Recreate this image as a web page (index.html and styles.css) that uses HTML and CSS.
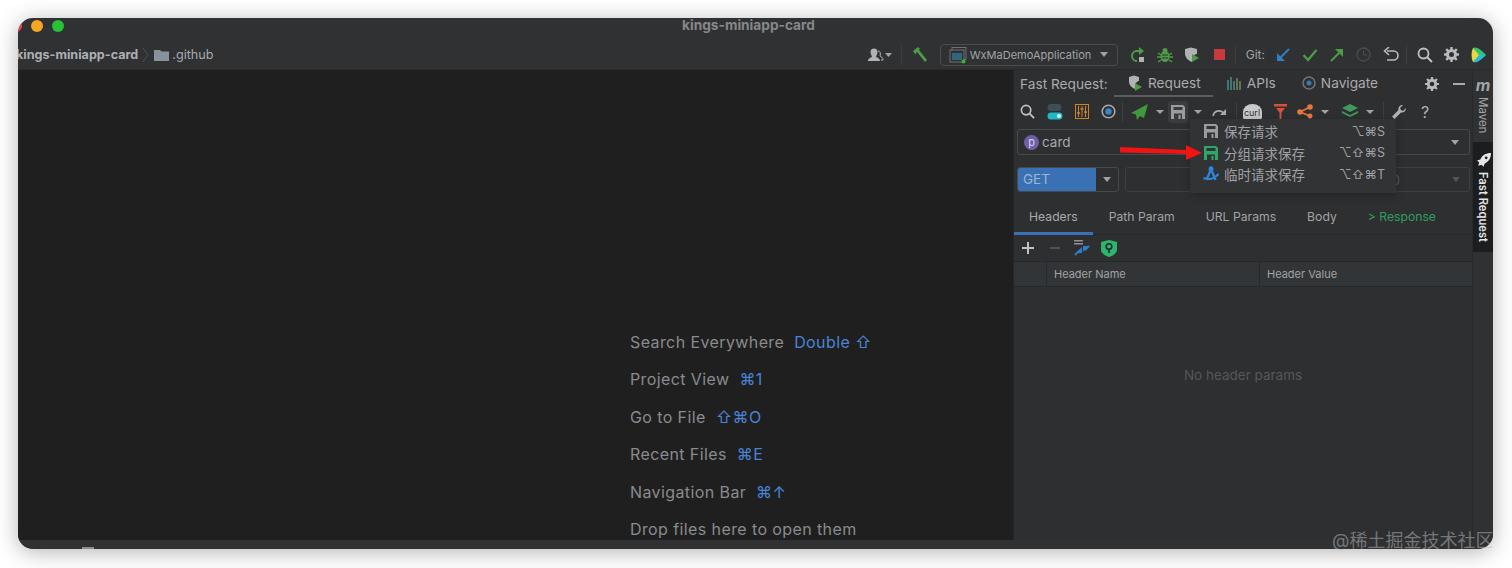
FILE: index.html
```html
<!DOCTYPE html>
<html lang="en">
<head>
  <meta charset="UTF-8">
  <title>kings-miniapp-card</title>
  <link rel="stylesheet" href="styles.css">
</head>
<body>

<div class="window">
  <!-- title bar -->
  <div class="titlebar">
    <div class="lights">
      <span class="light red"></span>
      <span class="light orange"></span>
      <span class="light green"></span>
    </div>
    <div class="title">kings-miniapp-card</div>
  </div>

  <!-- breadcrumb + main toolbar -->
  <div class="navbar">
    <span class="crumb-root">kings-miniapp-card</span>
    <svg class="crumb-sep" width="8" height="18" viewBox="0 0 8 18"><path d="M1 2l5 7-5 7" fill="none" stroke="#4c4f51"/></svg>
    <svg class="crumb-folder" width="15" height="12" viewBox="0 0 15 12"><path d="M0 1h6l1.500 1.500H15V12H0z" fill="#87929c"/></svg>
    <span class="crumb-dir">.github</span>

    <div class="main-tools">
      <div class="tool wide">
        <svg width="27" height="16" viewBox="0 0 27 16"><path d="M2 14c0-3 3-3 4-4.500C5 8 4.500 6.500 4.500 5a3.500 3.500 0 0 1 7 0c0 1.500-.5 3-1.500 4.500 1 1.500 4 1.500 4 4.500z" fill="#b0b2b4"/><path d="M12 4c2 0 3 2 2 5 1 1 3 1 3 4h-2" fill="none" stroke="#b0b2b4"/><path d="M19 6h7l-3.500 4z" fill="#a0a2a4"/></svg>
      </div>
      <span class="sep"></span>
      <div class="tool hammer">
        <svg width="18" height="18" viewBox="0 0 18 18"><path d="M2 5l5-4 2 2-1 1 8 10-2 2-8-10-1 1 0 2z" fill="#4e9a47"/></svg>
      </div>
      <div class="run-config">
        <svg width="18" height="18" viewBox="0 0 18 18"><rect x="3" y="1.500" width="14" height="12" fill="none" stroke="#6f7274"/><rect x="1" y="4" width="14" height="12" fill="#2f3133" stroke="#6f7274"/><rect x="3" y="7" width="10" height="7" fill="#33667e"/><circle cx="14.500" cy="15.500" r="2" fill="#2dbb2d"/></svg>
        <span>WxMaDemoApplication</span>
        <span class="caret"></span>
      </div>
      <div class="tool">
        <svg width="16" height="18" viewBox="0 0 16 18"><path d="M11 5H7a5 5 0 0 0 0 10" fill="none" stroke="#4e9a47" stroke-width="2"/><path d="M9 1l5 4-5 4z" fill="#4e9a47"/><rect x="9" y="11" width="5" height="5" fill="#b0b2b4"/></svg>
      </div>
      <div class="tool">
        <svg width="16" height="16" viewBox="0 0 16 16"><ellipse cx="8" cy="9.500" rx="4.500" ry="5.500" fill="#4e9a47"/><circle cx="8" cy="3.500" r="2.500" fill="#4e9a47"/><path d="M1 6l3 2M15 6l-3 2M0 10h4M16 10h-4M1 15l3-2M15 15l-3-2" stroke="#4e9a47" stroke-width="1.500"/><path d="M5 8h6M5 11h6" stroke="#2f3133"/></svg>
      </div>
      <div class="tool">
        <svg width="16" height="16" viewBox="0 0 16 16"><path d="M1 2l6-1.500L13 2v5c-2 0-5 2-5 8C3 13 1 10 1 6z" fill="#b0b2b4"/><path d="M8 7l7 4-7 4z" fill="#4e9a47"/></svg>
      </div>
      <div class="tool">
        <span class="stop"></span>
      </div>
      <span class="sep"></span>
      <span class="git-label">Git:</span>
      <div class="tool">
        <svg width="14" height="14" viewBox="0 0 14 14"><path d="M13 1L3 11" stroke="#2f7fc4" stroke-width="2"/><path d="M1 5v8h8z" fill="#2f7fc4"/></svg>
      </div>
      <div class="tool">
        <svg width="16" height="14" viewBox="0 0 16 14"><path d="M1.500 7l4.500 5L14.500 2" fill="none" stroke="#4e9a47" stroke-width="2.400"/></svg>
      </div>
      <div class="tool">
        <svg width="14" height="14" viewBox="0 0 14 14"><path d="M1 13L11 3" stroke="#4e9a47" stroke-width="2"/><path d="M13 9V1H5z" fill="#4e9a47"/></svg>
      </div>
      <div class="tool">
        <svg width="15" height="15" viewBox="0 0 15 15"><circle cx="7.500" cy="7.500" r="6.500" fill="none" stroke="#4a4c4e" stroke-width="1.300"/><path d="M7.500 3.500v4.500h3.500" fill="none" stroke="#4a4c4e"/></svg>
      </div>
      <div class="tool">
        <svg width="16" height="15" viewBox="0 0 16 15"><path d="M4 4h6.500a4 4 0 0 1 0 9H4" fill="none" stroke="#b8babc" stroke-width="1.600"/><path d="M6 0L1.500 4 6 8" fill="none" stroke="#b8babc" stroke-width="1.600"/></svg>
      </div>
      <span class="sep"></span>
      <div class="tool search-gap">
        <svg width="16" height="16" viewBox="0 0 16 16"><circle cx="6.500" cy="6.500" r="5" fill="none" stroke="#c0c2c4" stroke-width="1.800"/><path d="M10 10l5 5" stroke="#c0c2c4" stroke-width="2"/></svg>
      </div>
      <div class="tool">
        <svg width="15" height="15" viewBox="0 0 15 15"><circle cx="7.500" cy="7.500" r="4" fill="none" stroke="#b8babc" stroke-width="3"/><path d="M7.500 0v3M7.500 12v3M0 7.500h3M12 7.500h3M2.200 2.200l2 2M10.800 10.800l2 2M2.200 12.800l2-2M10.800 4.200l2-2" stroke="#b8babc" stroke-width="2.400"/></svg>
      </div>
      <div class="tool">
        <svg width="16" height="16" viewBox="0 0 16 16"><path d="M2 1c3-1 6 0 13 7-7 7-10 8-13 7z" fill="#2bb8d8"/><path d="M2 1c3-1 6 0 13 7H8z" fill="#35c46a"/><path d="M2 1l6 7-6 7C0 11 0 5 2 1z" fill="#e8d93a"/></svg>
      </div>
    </div>
  </div>

  <div class="workspace">
    <!-- empty editor -->
    <div class="editor">
      <div class="hint">Search Everywhere <b class="key">Double ⇧</b></div>
      <div class="hint">Project View <b class="key">⌘1</b></div>
      <div class="hint">Go to File <b class="key">⇧⌘O</b></div>
      <div class="hint">Recent Files <b class="key">⌘E</b></div>
      <div class="hint">Navigation Bar <b class="key">⌘↑</b></div>
      <div class="hint">Drop files here to open them</div>
    </div>

    <!-- Fast Request tool window -->
    <div class="panel">
      <div class="panel-head">
        <span class="panel-name">Fast Request:</span>
        <div class="head-tab active">
          <svg width="15" height="16" viewBox="0 0 15 16"><path d="M1 2l5-1.500L11 2v4c-2 0-4 2-4 8-4-2-6-4-6-8z" fill="#b0b2b4"/><path d="M7 8l7 4-7 4z" fill="#4e9a47"/></svg>
          <span>Request</span>
        </div>
        <div class="head-tab">
          <svg width="15" height="14" viewBox="0 0 15 14"><path d="M1 4v10M4 1v13M7 5v9" stroke="#4e8a8a" stroke-width="1.500"/><path d="M10 2v12M13 5v9" stroke="#7a8a5a" stroke-width="1.500"/></svg>
          <span>APIs</span>
        </div>
        <div class="head-tab">
          <svg width="14" height="14" viewBox="0 0 14 14"><circle cx="7" cy="7" r="6" fill="none" stroke="#6e7274" stroke-width="1.600"/><circle cx="7" cy="7" r="2.500" fill="#3a78b0"/></svg>
          <span>Navigate</span>
        </div>
        <div class="head-icons">
          <svg width="14" height="14" viewBox="0 0 15 15"><circle cx="7.500" cy="7.500" r="4" fill="none" stroke="#b8babc" stroke-width="3"/><path d="M7.500 0v3M7.500 12v3M0 7.500h3M12 7.500h3M2.200 2.200l2 2M10.800 10.800l2 2M2.200 12.800l2-2M10.800 4.200l2-2" stroke="#b8babc" stroke-width="2.400"/></svg>
          <span class="minimize"></span>
        </div>
      </div>

      <div class="panel-tools">
        <div class="ptool">
          <svg width="15" height="15" viewBox="0 0 16 16"><circle cx="6.500" cy="6.500" r="5" fill="none" stroke="#c0c2c4" stroke-width="1.800"/><path d="M10 10l5 5" stroke="#c0c2c4" stroke-width="2"/></svg>
        </div>
        <div class="ptool">
          <svg width="16" height="16" viewBox="0 0 16 16"><rect x="0.500" y="0" width="14" height="7" rx="3.500" fill="#3d5058"/><rect x="0.500" y="8.500" width="15" height="7" rx="3.500" fill="#1fbac4"/><circle cx="12" cy="12" r="2" fill="#e0f4f4"/></svg>
        </div>
        <div class="ptool">
          <svg width="14" height="15" viewBox="0 0 14 15"><rect x="0.500" y="0.500" width="13" height="14" fill="none" stroke="#d0822a"/><path d="M3.500 2v11M7 2v11M10.500 2v11" stroke="#d0822a"/><path d="M2 9h3M5.500 5h3M9 8h3" stroke="#d0822a" stroke-width="1.600"/></svg>
        </div>
        <div class="ptool">
          <svg width="15" height="15" viewBox="0 0 15 15"><circle cx="7.500" cy="7.500" r="6.300" fill="none" stroke="#a8aaac" stroke-width="1.600"/><circle cx="7.500" cy="7.500" r="3.200" fill="#3a86c8"/></svg>
        </div>
        <span class="sep panel-sep"></span>
        <div class="ptool plane">
          <svg width="17" height="16" viewBox="0 0 17 16"><path d="M17 0L0 9l5 1.500 1 5.500 3-4 4 2z" fill="#3f9a3c"/></svg>
        </div>
        <span class="caret small"></span>
        <div class="ptool save-on">
          <svg width="14" height="14" viewBox="0 0 14 14"><path d="M0 0h12l2 2v12H0z" fill="#9a9c9e"/><rect x="2.500" y="2" width="9" height="3" fill="#3a3d3f"/><rect x="3" y="8.500" width="8" height="5.500" fill="#3a3d3f"/><rect x="7.500" y="10" width="2" height="4" fill="#9a9c9e"/></svg>
        </div>
        <span class="caret small after-save"></span>
        <div class="ptool redo">
          <svg width="15" height="10" viewBox="0 0 15 10"><path d="M1 9c1-5 6-7 11-3" fill="none" stroke="#a8aaac" stroke-width="1.600"/><path d="M14 2v6H8z" fill="#a8aaac"/></svg>
        </div>
        <span class="sep panel-sep"></span>
        <div class="ptool curl">
          <span class="curl-badge">curl</span>
        </div>
        <div class="ptool filter">
          <svg width="13" height="15" viewBox="0 0 13 15"><path d="M0 0h13v2.500H0z" fill="#d6503c"/><path d="M2 4h9L7.500 8.500V15h-2V8.500z" fill="#d6503c"/></svg>
        </div>
        <div class="ptool share">
          <svg width="16" height="15" viewBox="0 0 16 15"><path d="M3 8l10-5M3 8l10 4" stroke="#e8763c" stroke-width="1.600"/><circle cx="3" cy="8" r="2.800" fill="#e8763c"/><circle cx="13" cy="3" r="2.800" fill="#e8763c"/><circle cx="13" cy="12" r="2.500" fill="#e8763c"/></svg>
        </div>
        <span class="caret small after-share"></span>
        <div class="ptool layers">
          <svg width="16" height="15" viewBox="0 0 16 15"><path d="M8 0l8 4-8 4-8-4z" fill="#3f9a5c"/><path d="M0 7l8 4 8-4v2l-8 4-8-4z" fill="#3f9a5c"/></svg>
        </div>
        <span class="caret small"></span>
        <span class="sep panel-sep last"></span>
        <div class="ptool wrench">
          <svg width="14" height="14" viewBox="0 0 14 14"><path d="M14 3l-3 3-2-1-1-2 3-3C8 0 6 2 6.500 5L0 11.500 2.500 14 9 7.500C12 8 14 6 14 3z" fill="#b0b2b4"/></svg>
        </div>
        <div class="ptool help">?</div>
      </div>

      <div class="field project">
        <span class="project-badge">p</span>
        <span>card</span>
        <span class="caret"></span>
      </div>

      <div class="url-row">
        <div class="method">
          <span class="method-name">GET</span>
          <span class="method-arrow"><span class="caret"></span></span>
        </div>
        <div class="field url">
          <span class="url-num">0</span>
          <span class="caret dim"></span>
        </div>
      </div>

      <div class="tabs">
        <div class="tab active">Headers</div>
        <div class="tab">Path Param</div>
        <div class="tab">URL Params</div>
        <div class="tab">Body</div>
        <div class="tab response">&gt; Response</div>
      </div>

      <div class="header-tools">
        <svg width="12" height="12" viewBox="0 0 12 12"><path d="M6 0v12M0 6h12" stroke="#c0c2c4" stroke-width="2"/></svg>
        <svg width="12" height="12" viewBox="0 0 12 12"><path d="M1 6h10" stroke="#505355" stroke-width="2"/></svg>
        <svg class="merge-icon" width="16" height="16" viewBox="0 0 16 16"><path d="M0 0h9v1.500H0zM0 3h9v1.500H0z" fill="#8f9193"/><path d="M1 15l5-5" stroke="#2f7fc4" stroke-width="2"/><path d="M8 7v6H2z" fill="#2f7fc4"/><path d="M15 6l-4 4" stroke="#2f7fc4" stroke-width="2"/><path d="M9 12V6h6z" fill="#2f7fc4"/></svg>
        <svg class="shield-icon" width="16" height="17" viewBox="0 0 16 17"><path d="M0 2l8-2 8 2v8c0 3-4 6-8 7-4-1-8-4-8-7z" fill="#2fb56a"/><circle cx="8" cy="6.500" r="2.800" fill="none" stroke="#123" stroke-width="1.500"/><path d="M8 9v4" stroke="#123" stroke-width="1.500"/></svg>
      </div>

      <div class="table-head">
        <div class="col col-index"></div>
        <div class="col col-name">Header Name</div>
        <div class="col col-value">Header Value</div>
      </div>

      <div class="empty">No header params</div>

      <!-- save dropdown -->
      <div class="menu">
        <div class="menu-item">
          <svg width="14" height="14" viewBox="0 0 14 14"><path d="M0 0h12l2 2v12H0z" fill="#9a9c9e"/><rect x="2.500" y="2" width="9" height="3" fill="#313335"/><rect x="3" y="8.500" width="8" height="5.500" fill="#313335"/><rect x="7.500" y="10" width="2" height="4" fill="#9a9c9e"/></svg>
          <span class="menu-label">保存请求</span>
          <span class="menu-key">⌥⌘S</span>
        </div>
        <div class="menu-item">
          <svg width="14" height="14" viewBox="0 0 14 14"><path d="M0 0h12l2 2v12H0z" fill="#2fa866"/><rect x="2.500" y="2" width="9" height="3" fill="#313335"/><rect x="3" y="8.500" width="8" height="5.500" fill="#313335"/><rect x="7.500" y="10" width="2" height="4" fill="#2fa866"/></svg>
          <span class="menu-label">分组请求保存</span>
          <span class="menu-key">⌥⇧⌘S</span>
        </div>
        <div class="menu-item">
          <svg class="compass" width="16" height="16" viewBox="0 0 16 16"><path d="M8 3L3.500 14M8 3l4.500 11M0.500 12c5 2 11 1 15-4" fill="none" stroke="#2f86dc" stroke-width="2.200"/><circle cx="8" cy="2.800" r="2.500" fill="#2f86dc"/></svg>
          <span class="menu-label">临时请求保存</span>
          <span class="menu-key">⌥⇧⌘T</span>
        </div>
      </div>

      <svg class="red-arrow" width="82" height="15" viewBox="0 0 82 15"><path d="M0 2L66 5V0l16 8-16 7V9L0 7.500z" fill="#f01414"/></svg>
    </div>

    <!-- right tool strip -->
    <div class="strip">
      <div class="strip-m">m</div>
      <div class="strip-maven">Maven</div>
      <div class="strip-active">
        <svg width="15" height="16" viewBox="0 0 14 15"><path d="M14 0c-5 0-8 2-10 6L1 7l2 2-1 3 3-1 2 2 1-3c4-2 6-5 6-10z" fill="#e6e6e6"/><circle cx="9.500" cy="4.500" r="1.300" fill="#1c1d1e"/></svg>
        <span>Fast Request</span>
      </div>
    </div>
  </div>

  <div class="statusbar">
    <span class="status-mark"></span>
  </div>
</div>

<div class="watermark">@稀土掘金技术社区</div>

</body>
</html>
```

FILE: styles.css
```css
html, body {
  margin: 0;
  padding: 0;
  height: 100%;
  background-color: #fff;
  overflow: hidden;
  font-family: Inter, "Noto Sans CJK SC", "DejaVu Sans", sans-serif;
}

body {
  padding: 18px 0 0 18px;
  box-sizing: border-box;
}

.window {
  width: 1475px;
  height: 531px;
  border-radius: 15px;
  overflow: hidden;
  background-color: #2f3133;
  box-shadow: 0 3px 22px rgba(0, 0, 0, 0.3);
  display: flex;
  flex-direction: column;
}

/* title bar */
.titlebar {
  height: 22px;
  flex: none;
  display: flex;
  align-items: center;
  padding-bottom: 8px;
  box-sizing: border-box;
}

.lights {
  display: flex;
  gap: 9px;
  margin: 2px 0 0 -8px;
  flex: none;
}

.light {
  width: 12px;
  height: 12px;
  border-radius: 50%;
}

.light.red { background-color: #e5484d; }
.light.orange { background-color: #f5a623; }
.light.green { background-color: #28c236; }

.title {
  margin-left: 618px;
  font-size: 13.700px;
  font-weight: 700;
  color: #85878a;
}

/* breadcrumb bar */
.navbar {
  height: 30px;
  flex: none;
  display: flex;
  align-items: center;
  font-size: 12.600px;
  color: #a9abad;
  border-bottom: 1px solid #292b2d;
  box-sizing: border-box;
}

.crumb-root {
  font-weight: 700;
  margin-left: -2px;
  color: #adb0b2;
}

.crumb-sep {
  margin-left: 4px;
}

.crumb-folder {
  margin-left: 4px;
}

.crumb-dir {
  margin-left: 3px;
}

.main-tools {
  margin-left: auto;
  display: flex;
  align-items: center;
  padding-right: 1px;
}

.tool {
  width: 27px;
  height: 26px;
  display: flex;
  align-items: center;
  justify-content: center;
}

.tool.wide {
  width: 33px;
  justify-content: flex-start;
}

.tool.hammer {
  margin-left: 3px;
}

.sep {
  width: 1px;
  height: 20px;
  background-color: #3c3e40;
  margin: 0 2px;
  flex: none;
}

.run-config {
  width: 178px;
  height: 22px;
  box-sizing: border-box;
  margin: 0 7px 0 6px;
  border: 1px solid #4a4d4f;
  border-radius: 4px;
  display: flex;
  align-items: center;
  gap: 3px;
  padding: 0 9px 0 8px;
  font-size: 11px;
  color: #a2a4a6;
}

.run-config svg {
  flex: none;
}

.run-config .caret {
  margin-left: auto;
}

.caret {
  width: 0;
  height: 0;
  flex: none;
  border-left: 4.500px solid transparent;
  border-right: 4.500px solid transparent;
  border-top: 5px solid #a0a2a4;
}

.caret.small {
  border-left-width: 4px;
  border-right-width: 4px;
  border-top-width: 4px;
}

.caret.dim {
  border-top-color: #555759;
}

.caret.after-save {
  margin-left: 6px;
}

.caret.after-share {
  margin-left: 4px;
}

.stop {
  width: 11px;
  height: 11px;
  background-color: #c8383c;
}

.git-label {
  font-size: 12px;
  color: #a2a4a6;
  margin-left: 8px;
  margin-right: 4px;
}

.search-gap {
  margin-left: 2px;
}

/* editor area */
.workspace {
  flex: 1;
  min-height: 0;
  display: flex;
}

.editor {
  width: 995px;
  flex: none;
  background-color: #1f1f20;
  padding: 254px 0 0 612px;
  box-sizing: border-box;
  overflow: hidden;
}

.hint {
  font-size: 16px;
  line-height: 37.400px;
  letter-spacing: 0.400px;
  color: #898b8d;
  white-space: nowrap;
}

.key {
  font-weight: 400;
  color: #4a83d6;
  margin-left: 5px;
}

/* fast request panel */
.panel {
  position: relative;
  width: 459px;
  flex: none;
  background-color: #2d2f31;
  border-left: 1px solid #242526;
  box-sizing: border-box;
  display: flex;
  flex-direction: column;
}

.panel-head {
  height: 27px;
  flex: none;
  display: flex;
  align-items: center;
  font-size: 13.700px;
  color: #a9abad;
  padding-left: 6px;
  box-sizing: border-box;
}

.panel-name {
  width: 94px;
}

.head-tab {
  height: 27px;
  display: flex;
  align-items: center;
  gap: 5px;
  padding: 0 12px 0 14px;
  box-sizing: border-box;
  border-bottom: 2px solid transparent;
}

.head-tab.active {
  border-bottom-color: #5a5d5f;
}

.head-icons {
  margin-left: auto;
  display: flex;
  align-items: center;
  gap: 14px;
  padding-right: 7px;
}

.minimize {
  width: 12px;
  height: 2px;
  background-color: #a9abad;
}

.panel-tools {
  height: 29px;
  flex: none;
  display: flex;
  align-items: center;
}

.ptool {
  width: 27px;
  height: 26px;
  display: flex;
  align-items: center;
  justify-content: center;
  flex: none;
}

.panel-sep {
  margin: 0;
}

.panel-sep.last {
  margin-left: 9px;
}

.ptool.plane {
  width: 33px;
}

.ptool.save-on {
  width: 20px;
  height: 22px;
  background-color: #3a3d3f;
  border-radius: 3px;
  margin-left: 4px;
}

.ptool.redo {
  width: 34px;
}

.ptool.curl {
  width: 30px;
}

.ptool.filter {
  width: 26px;
}

.ptool.share {
  width: 24px;
}

.curl-badge {
  width: 19px;
  height: 16px;
  border-radius: 50% 50% 3px 3px;
  background-color: #c8cacc;
  color: #2d2f31;
  font-size: 9px;
  line-height: 17px;
  text-align: center;
}

.ptool.layers {
  width: 33px;
  margin-left: 4px;
}

.ptool.wrench {
  width: 30px;
}

.ptool.help {
  font-size: 16px;
  color: #b0b2b4;
  width: 22px;
}

.field {
  border: 1px solid #47494b;
  border-radius: 3px;
  box-sizing: border-box;
  display: flex;
  align-items: center;
  font-size: 13.500px;
  color: #a9abad;
}

.field.project {
  height: 26px;
  margin: 3px 2px 0 3px;
  padding: 0 10px 0 6px;
  gap: 3px;
}

.field.project .caret {
  margin-left: auto;
}

.project-badge {
  width: 15px;
  height: 15px;
  border-radius: 50%;
  background-color: #6f5ea8;
  color: #d8d4e8;
  font-size: 11px;
  line-height: 14px;
  text-align: center;
}

.url-row {
  height: 25px;
  flex: none;
  display: flex;
  margin: 12px 2px 0 3px;
  gap: 6px;
}

.method {
  width: 102px;
  flex: none;
  border: 1px solid #47494b;
  border-radius: 3px;
  box-sizing: border-box;
  display: flex;
  overflow: hidden;
  font-size: 13.500px;
}

.method-name {
  width: 78px;
  background-color: #3a70b4;
  color: #9db6d2;
  padding: 3px 0 0 5px;
  box-sizing: border-box;
}

.method-arrow {
  flex: 1;
  display: flex;
  align-items: center;
  justify-content: center;
}

.field.url {
  flex: 1;
  padding: 0 9px 0 0;
  justify-content: flex-end;
  gap: 52px;
  border-color: #3d3f41;
  color: #55575a;
}

.tabs {
  height: 35px;
  flex: none;
  margin-top: 8px;
  display: flex;
  border-bottom: 1px solid #26282a;
  box-sizing: border-box;
  font-size: 12.200px;
  color: #a2a4a6;
}

.tab {
  padding: 9px 15px 0;
  margin-right: 1px;
  box-sizing: border-box;
  border-bottom: 3px solid transparent;
  height: 35px;
}

.tab.active {
  border-bottom-color: #3a70b8;
  color: #a9abad;
}

.tab.response {
  color: #2f9e5c;
}

.header-tools {
  height: 27px;
  flex: none;
  display: flex;
  align-items: center;
  gap: 15px;
  padding-left: 8px;
  box-sizing: border-box;
  border-bottom: 1px solid #26282a;
}

.merge-icon {
  margin-left: -2px;
}

.shield-icon {
  margin-left: -4px;
}

.table-head {
  height: 25px;
  flex: none;
  display: flex;
  background-color: #323537;
  border-bottom: 1px solid #26282a;
  box-sizing: border-box;
  font-size: 11px;
  color: #a2a4a6;
}

.col {
  border-right: 1px solid #26282a;
  padding-left: 7px;
  line-height: 24px;
  box-sizing: border-box;
}

.col-index {
  width: 33px;
  flex: none;
}

.col-name {
  width: 213px;
  flex: none;
}

.col-value {
  flex: 1;
  border-right: none;
}

.empty {
  flex: 1;
  text-align: center;
  padding-top: 80px;
  font-size: 13.500px;
  color: #55575a;
}

/* dropdown over the panel */
.menu {
  position: absolute;
  left: 176px;
  top: 49px;
  width: 206px;
  height: 74px;
  padding: 1.500px 11px 0 14px;
  box-sizing: border-box;
  background-color: #313335;
  box-shadow: 0 2px 8px rgba(0, 0, 0, 0.25);
}

.menu-item {
  height: 21.500px;
  display: flex;
  align-items: center;
  gap: 6px;
  font-size: 13.500px;
  color: #a0a2a4;
}

.menu-item svg {
  flex: none;
  width: 14px;
}

.menu-item svg.compass {
  width: 16px;
  margin: 0 -1px;
}

.menu-label {
  flex: 1;
}

.menu-key {
  font-size: 12.500px;
}

.red-arrow {
  position: absolute;
  left: 106px;
  top: 75px;
}

/* right strip */
.strip {
  flex: 1;
  background-color: #2f3133;
  border-left: 1px solid #27292b;
  display: flex;
  flex-direction: column;
  align-items: center;
}

.strip-m {
  height: 27px;
  font-size: 16px;
  font-weight: 700;
  font-style: italic;
  color: #a2a4a6;
  line-height: 30px;
}

.strip-maven {
  writing-mode: vertical-rl;
  font-size: 11.500px;
  color: #a2a4a6;
  height: 45px;
}

.strip-active {
  width: 100%;
  height: 110px;
  background-color: #1c1d1e;
  color: #e6e6e6;
  display: flex;
  flex-direction: column;
  align-items: center;
  gap: 3px;
  padding-top: 11px;
  box-sizing: border-box;
  font-size: 11.200px;
  font-weight: 600;
}

.strip-active span {
  writing-mode: vertical-rl;
}

/* bottom bar */
.statusbar {
  height: 9px;
  flex: none;
  background-color: #2f3133;
  position: relative;
}

.status-mark {
  position: absolute;
  left: 64px;
  bottom: 0;
  width: 12px;
  height: 2px;
  background-color: #8a8e92;
}

.watermark {
  position: absolute;
  left: 1332px;
  top: 528px;
  font-size: 18px;
  line-height: 26px;
  color: rgba(190, 190, 190, 0.5);
  white-space: nowrap;
}
```
